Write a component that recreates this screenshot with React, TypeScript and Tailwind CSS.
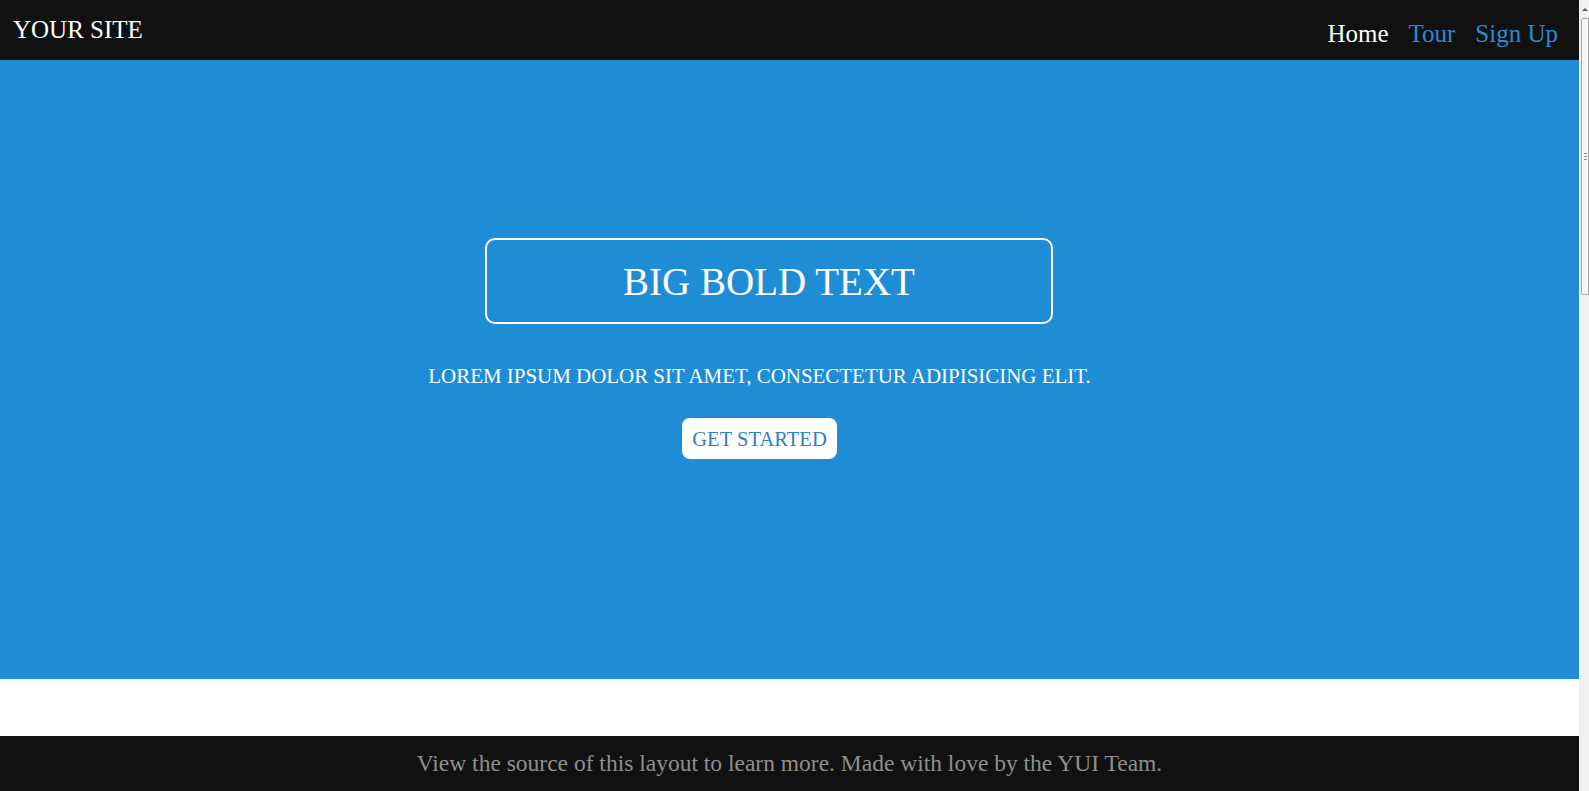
import React from 'react';

const serif = { fontFamily: '"Liberation Serif", "Times New Roman", serif' };

const Scrollbar: React.FC = () => (
  <div className="w-[10px] h-[791px] bg-[#f0f0f0] flex flex-col">
    <div className="h-[18px] flex items-center justify-end pr-[1px]">
      <div className="w-0 h-0 border-l-[3px] border-r-[3px] border-b-[3px] border-l-transparent border-r-transparent border-b-[#606060]" />
    </div>
    <div className="ml-[2px] h-[277px] bg-[#f7f7f7] border border-[#a8a8a8] rounded-l-[2px] flex flex-col items-end justify-center gap-[2px] pr-[1px]">
      <div className="w-[3px] h-[1px] bg-[#8a8a8a]" />
      <div className="w-[3px] h-[1px] bg-[#8a8a8a]" />
      <div className="w-[3px] h-[1px] bg-[#8a8a8a]" />
    </div>
  </div>
);

export default function App() {
  return (
    <div className="w-[1589px] h-[791px] flex overflow-hidden bg-white" style={serif}>
      <div className="flex-1 flex flex-col">
        {/* Header */}
        <div className="h-[60px] bg-[#111111] flex justify-between">
          <a href="#" className="pl-[13px] pt-[15px] text-[25px] leading-[30px] text-white">
            YOUR SITE
          </a>
          <nav className="flex gap-[20px] pr-[21px] pt-[19px] text-[25px] leading-[30px]">
            <a href="#" className="text-white">Home</a>
            <a href="#" className="text-[#2a8bd3]">Tour</a>
            <a href="#" className="text-[#2a8bd3]">Sign Up</a>
          </nav>
        </div>

        {/* Splash */}
        <div className="h-[619px] bg-[#1f8dd6] flex flex-col items-center pr-[60px] pt-[178px] uppercase text-white">
          <h1 className="ml-[19px] w-[568px] h-[86px] border-2 border-white rounded-[10px] pt-[22px] text-center text-[39px] leading-[39px] font-normal">
            Big Bold Text
          </h1>
          <p className="mt-[40px] text-[20.95px] leading-[24px]">
            Lorem ipsum dolor sit amet, consectetur adipisicing elit.
          </p>
          <a
            href="#"
            className="mt-[30px] w-[155px] h-[41px] bg-white rounded-[8px] pt-[9px] text-center text-[20.6px] leading-[24px] text-[#2f7fc1]"
          >
            Get Started
          </a>
        </div>

        <div className="flex-1" />

        {/* Footer */}
        <div className="h-[55px] bg-[#111111] flex items-center justify-center text-[23.5px] text-[#8f8f8f]">
          View the source of this layout to learn more. Made with love by the YUI Team.
        </div>
      </div>
      <Scrollbar />
    </div>
  );
}
